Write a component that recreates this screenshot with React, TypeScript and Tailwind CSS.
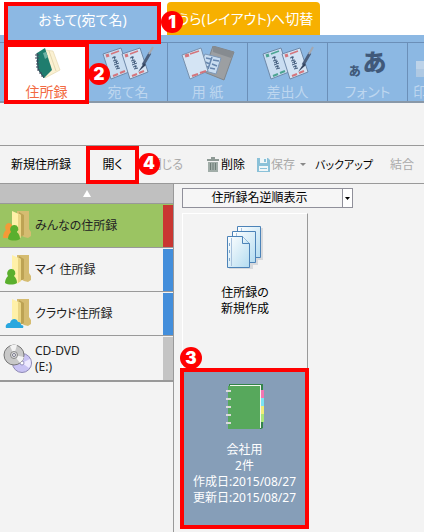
import type { ReactNode } from "react";

type MarkProps = { n: number; className: string };

function Mark({ n, className }: MarkProps) {
    return (
        <span
            className={`absolute z-20 flex h-[22px] w-[22px] items-center justify-center rounded-full bg-[#ff0000] font-['Inter',sans-serif] text-[17px] leading-none font-black text-white ${className}`}
        >
            {n}
        </span>
    );
}

function AddressBookIcon() {
    return (
        <svg width="36" height="36" viewBox="0 0 36 36" aria-hidden="true">
            <path d="m16 3 8 1 7 19-15 8Z" fill="#fbf1d2" stroke="#e0d2a8" strokeWidth=".6" />
            <path d="m20 4 7 20" fill="none" stroke="#e5d8b2" strokeWidth="1" />
            <path d="m8 6 8-5 7 22-8 8-6-9Z" fill="#1f7d6e" />
            <path d="m14 6 3-1 2 5-3 2Z" fill="#6fb3a5" />
            <path d="m8 6 1 16 6 9" fill="none" stroke="#174f55" strokeWidth="1" />
            <path d="M6 8h4M6 11h4M7 14h3M7 17h3M7 20h3M8 23h3M10 26h3M12 29h3" stroke="#42475c" />
        </svg>
    );
}

function Pen() {
    return (
        <>
            <path d="m48 7-7 12" stroke="#4c5f7c" strokeWidth="3" />
            <path d="m51 1-4 7" stroke="#a4a8b0" strokeWidth="2" />
            <path d="m42 17-6 9 8-7Z" fill="#34445f" />
        </>
    );
}

function PostcardsIcon({ green = false }: { green?: boolean }) {
    const mark = green ? "#4ca492" : "#d4757c";
    return (
        <svg width="52" height="36" viewBox="0 0 52 36" aria-hidden="true" fill="none">
            <path d="M1 8 19 2l8 24-18 7Z" fill="#c9ddf1" stroke="#6e89a9" />
            <path d="m4 10 3-1" stroke={mark} strokeWidth="3" />
            <path d="m9 8 8-3" stroke={mark} strokeWidth="1.5" />
            <path d="m11 30 5-2m2-1 5-2" stroke={mark} strokeWidth="2" />
            <path
                d="m10 12 4-1m-2-1 1 4m-2 1 4-1m-3 3 4-2m-2 0 1 3m-3 1 5-2m-4 4 4-1m-2-1 1 3m-2 1 4-1"
                stroke="#435d7d"
                strokeWidth="1"
            />
            <path d="m20 8 18-6 8 24-18 7Z" fill="#d4e4f4" stroke="#6e89a9" />
            <path d="m23 10 3-1" stroke="#d4757c" strokeWidth="3" />
            <path d="m28 8 8-3" stroke="#d4757c" strokeWidth="1.5" />
            <path d="m30 30 5-2m2-1 5-2" stroke="#d4757c" strokeWidth="2" />
            <path
                d="m28 12 4-1m-2-1 1 4m-2 1 4-1m-3 3 4-2m-2 0 1 3m-3 1 5-2m-4 4 4-1m-2-1 1 3m-2 1 4-1"
                stroke="#435d7d"
                strokeWidth="1"
            />
            <Pen />
        </svg>
    );
}

function PaperIcon() {
    return (
        <svg width="54" height="36" viewBox="0 0 54 36" aria-hidden="true" fill="none">
            <path d="m32 0 21 6-10 28-20-8Z" fill="#9c9fa2" stroke="#81868b" />
            <path d="m32 0 0 6 18 6 3-6Z" fill="#868b90" />
            <path d="m24 8 16 4-5 16-18-5Z" fill="#c9ddf1" stroke="#7c98b9" />
            <path
                d="m25 12 5 1m2 1 6 1m-14 1 5 2m2 0 5 2m-14 0 5 1m2 1 5 1m-3-12-4 12"
                stroke="#6686ae"
                strokeWidth="1.5"
            />
            <path d="M1 9 20 2l7 23-18 8Z" fill="#d4e4f4" stroke="#7891ae" />
            <path d="m4 10 4-1" stroke="#d4757c" strokeWidth="3" />
            <path d="m9 8 9-3" stroke="#d4757c" strokeWidth="1.5" />
            <path d="m11 30 6-2m2-1 6-2" stroke="#d4757c" strokeWidth="2" />
        </svg>
    );
}

function FontIcon() {
    return (
        <span className="flex h-9 items-end gap-[2px] font-black text-[#40597a]" aria-hidden="true">
            <span className="pb-[2px] text-[12px] leading-[16px]">あ</span>
            <span className="pb-1 text-[24px] leading-[32px]">あ</span>
        </span>
    );
}

const navItems: { label: string; icon: ReactNode }[] = [
    { label: "用 紙", icon: <PaperIcon /> },
    { label: "差出人", icon: <PostcardsIcon green /> },
    { label: "フォント", icon: <FontIcon /> },
];

type FolderKind = "shared" | "mine" | "cloud";

function FolderIcon({ kind }: { kind: FolderKind }) {
    return (
        <svg width="30" height="32" viewBox="0 0 30 32" aria-hidden="true">
            <path d="M14 1h12v18l2 3v4l-3 2-4-1-7-4Z" fill="#d5bc71" />
            <path d="m16 2 5 3v20l-6 3Z" fill="#bda354" />
            <path d="m9 1 9 4v22l-4 3-5-6Z" fill="#fff0a8" />
            <path d="m15 4 3 1v22l-3 2Z" fill="#ead584" />
            {kind === "shared" && (
                <path d="M6 13a4 4 0 0 1 3 6l2 9H0c0-4 1-6 3-8-2-3 0-7 3-7Z" fill="#f49a38" />
            )}
            {kind !== "cloud" && (
                <path
                    d="M11 15a4 4 0 0 1 3 7c2 2 3 4 3 7-3 2-9 2-12 0 0-3 1-5 3-7-2-3 0-7 3-7Z"
                    fill="#5aaf2d"
                    transform={kind === "mine" ? "translate(-3 0)" : undefined}
                />
            )}
            {kind === "cloud" && (
                <path d="M3 30c-1-3 1-5 4-5 1-5 7-5 8-1 3 0 3 2 3 3 2 0 3 1 2 3Z" fill="#29a7df" />
            )}
        </svg>
    );
}

function DiscIcon() {
    return (
        <svg width="30" height="30" viewBox="0 0 30 30" aria-hidden="true">
            <circle cx="19" cy="19" r="9.5" fill="#c9c3f3" stroke="#8e89b5" />
            <path d="m19 19 8-4a9 9 0 0 1-1 9Z" fill="#eeeaff" />
            <circle cx="19" cy="19" r="2" fill="#fff" stroke="#9590bd" />
            <circle cx="11" cy="11" r="10" fill="#c8c8c8" stroke="#777" />
            <path d="m11 11-4-9a10 10 0 0 1 7-1ZM11 11l6 8a10 10 0 0 0 4-6Z" fill="#f3f3f3" />
            <circle cx="11" cy="11" r="3.5" fill="#ddd" stroke="#888" />
            <circle cx="11" cy="11" r="1.5" fill="#fff" stroke="#778" />
        </svg>
    );
}

const folders = [
    { label: "みんなの住所録", icon: <FolderIcon kind="shared" />, row: "bg-[#9bc462]", stripe: "bg-[#c93732]" },
    { label: "マイ 住所録", icon: <FolderIcon kind="mine" />, row: "", stripe: "bg-[#438edb]" },
    { label: "クラウド住所録", icon: <FolderIcon kind="cloud" />, row: "", stripe: "bg-[#438edb]" },
];

function TrashIcon() {
    return (
        <svg width="14" height="15" viewBox="0 0 14 15" aria-hidden="true">
            <path d="M1 2h4V0h4v2h4v2H1Z" fill="#8e9a95" />
            <path d="M2 5h10v10H2Z" fill="#a1ada8" />
            <path d="M4.5 6v7M7 6v7M9.5 6v7" stroke="#6f7e78" />
        </svg>
    );
}

function SaveIcon() {
    return (
        <svg width="13" height="14" viewBox="0 0 13 14" aria-hidden="true">
            <path d="M0 0h11l2 2v12H0Z" fill="#8bc1d8" />
            <path d="M3 0h7v5H3ZM2 8h9v5H2Z" fill="#f0f6f8" />
            <path d="M7 1h2v3H7ZM3 10h7v1H3Z" fill="#8bc1d8" />
        </svg>
    );
}

function NewPagesIcon() {
    return (
        <svg width="38" height="44" viewBox="0 0 38 44" aria-hidden="true">
            <defs>
                <linearGradient id="page" x1="0" y1="0" x2="1" y2="1">
                    <stop offset="0" stopColor="#ffffff" />
                    <stop offset="1" stopColor="#b4dcf0" />
                </linearGradient>
            </defs>
            <path d="M13 3h24v32H13ZM8 8h24v32H8ZM3 13h24v31H3Z" fill="#d7d9dc" />
            <g fill="url(#page)" stroke="#4c83b8">
                <path d="M11.500 1.500h23v31h-23Z" />
                <path d="M6.500 6.500h23v31h-23Z" />
                <path d="M1.500 11.500h15l7 7v24h-22Z" />
                <path d="M16.500 11.500v7h7" />
            </g>
            <path d="M5.500 13v28M15.500 3v3M10.500 8v3" stroke="#a8c1dc" />
            <path d="M3.500 18v3M3.500 25v3M3.500 33v3" stroke="#84a9cb" />
        </svg>
    );
}

function NotebookIcon() {
    return (
        <svg width="38" height="46" viewBox="0 0 38 46" aria-hidden="true">
            <path d="M3 0h34v44l-2 1H3Z" fill="#33844a" />
            <path d="M4 1h31v43H4Z" fill="#f4f7ef" />
            <path d="M2 2h32v43H2Z" fill="#57a85c" />
            <path d="M35 6h3v8h-3Z" fill="#f576b2" />
            <path d="M35 14h3v8h-3Z" fill="#7ae4f3" />
            <path d="M35 22h3v8h-3Z" fill="#f1ed78" />
            <path d="M35 30h3v8h-3Z" fill="#a9e779" />
            <path d="M0 7h5M0 15h5M0 23h5M0 31h5M0 39h5" stroke="#dadada" strokeWidth="2" />
        </svg>
    );
}

export default function App() {
    return (
        <div className="flex min-h-screen flex-col overflow-hidden bg-[#f3f3f3] font-['Noto_Sans','Noto_Sans_CJK_JP',sans-serif] text-[12px] leading-[16px] text-black [font-feature-settings:'palt']">
            <header>
                <div className="flex h-[35px] bg-white pt-[2px] pl-1 text-[14px] leading-[20px]">
                    <button
                        type="button"
                        className="relative z-10 h-[42px] w-[157px] shrink-0 border-4 border-[#ff0000] bg-[#8cb8e3] pb-[6px] text-white"
                    >
                        おもて(宛て名)
                        <Mark n={1} className="top-[5px] -right-[26px]" />
                    </button>
                    <button
                        type="button"
                        className="ml-[6px] h-[33px] w-[153px] shrink-0 rounded-t bg-[#f7b000] pl-[4px] whitespace-nowrap text-white"
                    >
                        うら(レイアウト)へ切替
                    </button>
                </div>
                <div className="bg-[#8cb8e3] pt-[7px]">
                    <nav className="flex h-[61px] border-t border-b-2 border-t-[#6b8fb8] border-b-[#8998a8] pl-1 text-[14px] leading-[16px]">
                        <button
                            type="button"
                            className="relative z-10 flex h-[61px] w-[85px] shrink-0 flex-col items-center gap-px border-4 border-[#ff0000] bg-white text-[#f26a42]"
                        >
                            <AddressBookIcon />
                            住所録
                            <Mark n={2} className="top-[16px] -right-[25px]" />
                        </button>
                        <button
                            type="button"
                            className="flex w-[79px] shrink-0 flex-col items-center gap-[2px] border-r border-[#6b8fb8] pt-[3px] text-[#bdd6ef]"
                        >
                            <PostcardsIcon />
                            宛て名
                        </button>
                        {navItems.map(item => (
                            <button
                                key={item.label}
                                type="button"
                                className="flex w-20 shrink-0 flex-col items-center gap-[2px] border-r border-[#6b8fb8] pt-[3px] text-[#bdd6ef]"
                            >
                                {item.icon}
                                {item.label}
                            </button>
                        ))}
                        <button
                            type="button"
                            className="flex min-w-0 flex-1 flex-col items-start gap-[2px] overflow-hidden pt-[3px] pl-[5px] text-[#bdd6ef]"
                        >
                            <svg width="36" height="36" viewBox="0 0 36 36" aria-hidden="true" className="shrink-0">
                                <path d="M3 15h30v16H3Z" fill="#bdd3e9" />
                                <path d="M3 23h30v8H3Z" fill="#afc9e3" />
                            </svg>
                            印
                        </button>
                    </nav>
                </div>
            </header>

            {/* Toolbar */}
            <div className="mt-[42px] flex h-[39px] shrink-0 items-center border-y border-[#999] whitespace-nowrap">
                <button type="button" className="h-full w-[86px] shrink-0 pr-[4px]">
                    新規住所録
                </button>
                <button
                    type="button"
                    className="relative z-10 h-[38px] w-[53px] shrink-0 border-4 border-[#ff0000]"
                >
                    開く
                    <Mark n={4} className="top-[3px] -right-[25px]" />
                </button>
                <button type="button" disabled className="h-full w-[44px] shrink-0 text-right text-[#aaa]">
                    閉じる
                </button>
                <button type="button" className="ml-[23px] flex h-full shrink-0 items-center gap-px">
                    <TrashIcon />
                    削除
                </button>
                <button type="button" disabled className="ml-3 flex h-full shrink-0 items-center gap-px text-[#aaa]">
                    <SaveIcon />
                    保存
                    <svg width="6" height="3" viewBox="0 0 6 3" aria-hidden="true" className="ml-1">
                        <path d="M0 0h6L3 3Z" fill="#888" />
                    </svg>
                </button>
                <button type="button" className="ml-2 h-full w-[60px] shrink-0 text-[11px]">
                    バックアップ
                </button>
                <button type="button" disabled className="ml-4 h-full shrink-0 text-[#aaa]">
                    結合
                </button>
            </div>

            <div className="flex flex-1">
                <aside className="w-[174px] shrink-0 border-r border-[#999] text-[#222]">
                    <button
                        type="button"
                        aria-label="上へ"
                        className="flex h-5 w-full items-center justify-center border-b border-[#999] bg-[#c0c0c0]"
                    >
                        <svg width="8" height="7" viewBox="0 0 8 7" aria-hidden="true">
                            <path d="M4 0 8 7H0Z" fill="#fff" />
                        </svg>
                    </button>
                    {folders.map(folder => (
                        <button
                            key={folder.label}
                            type="button"
                            className={`flex h-11 w-full items-center border-b border-[#999] pt-px pl-[3px] text-left ${folder.row}`}
                        >
                            {folder.icon}
                            <span className="flex-1 pl-[2px]">{folder.label}</span>
                            <span className={`h-full w-[10px] ${folder.stripe}`} />
                        </button>
                    ))}
                    <button
                        type="button"
                        className="flex h-[46px] w-full items-center border-b-2 border-[#999] pt-px pl-[3px] text-left"
                    >
                        <DiscIcon />
                        <span className="flex-1 pl-[2px]">
                            CD-DVD
                            <br />
                            (E:)
                        </span>
                        <span className="h-full w-[10px] bg-[#c4c4c4]" />
                    </button>
                </aside>

                <main className="min-w-0 flex-1 pt-1 pl-[6px]">
                    <div className="relative ml-[2px] h-5 w-[171px]">
                        <select
                            aria-label="表示順"
                            className="block h-full w-full appearance-none border border-[#90909a] bg-[#f6f6f6] pr-[16px] leading-[16px] [text-align-last:center]"
                        >
                            <option>住所録名逆順表示</option>
                        </select>
                        <span className="pointer-events-none absolute inset-y-0 right-0 flex w-[11px] items-center justify-center border border-[#90909a] bg-white">
                            <svg width="5" height="3" viewBox="0 0 5 3" aria-hidden="true">
                                <path d="M0 0h5L2.500 3Z" fill="#000" />
                            </svg>
                        </span>
                    </div>

                    <button
                        type="button"
                        className="mt-[5px] ml-[2px] flex h-[155px] w-[126px] flex-col items-center border-t border-r border-l border-white border-r-[#999] pt-[11px]"
                    >
                        <NewPagesIcon />
                        <span className="mt-4">
                            住所録の
                            <br />
                            新規作成
                        </span>
                    </button>

                    <button
                        type="button"
                        className="relative flex h-[161px] w-[129px] flex-col items-center border-4 border-[#ff0000] bg-[#869eb8] pt-3 text-white"
                    >
                        <Mark n={3} className="-top-[25px] -left-[4px]" />
                        <NotebookIcon />
                        <span className="mt-[12px]">
                            会社用
                            <br />
                            2件
                            <br />
                            作成日:2015/08/27
                            <br />
                            更新日:2015/08/27
                        </span>
                    </button>
                </main>
            </div>
        </div>
    );
}
